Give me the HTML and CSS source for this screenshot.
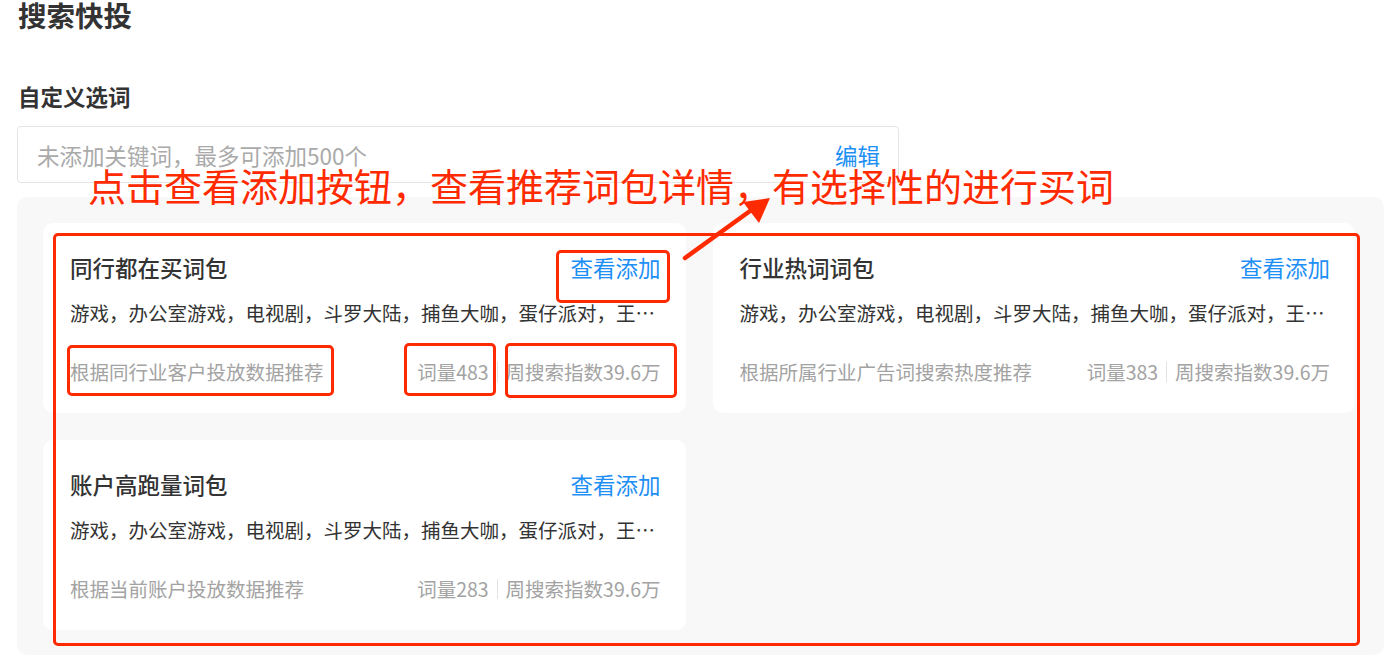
FILE: index.html
```html
<!DOCTYPE html>
<html lang="zh-CN">
<head>
<meta charset="utf-8">
<title>搜索快投</title>
<link rel="stylesheet" href="styles.css">
</head>
<body>
<div class="page">
  <h1 class="title">搜索快投</h1>
  <div class="label">自定义选词</div>
  <div class="input">
    <span class="placeholder">未添加关键词，最多可添加500个</span>
    <span class="link">编辑</span>
  </div>
  <div class="panel">
    <div class="card">
      <div class="card-head">
        <span class="card-title">同行都在买词包</span>
        <span class="link">查看添加</span>
      </div>
      <div class="keywords">游戏，办公室游戏，电视剧，斗罗大陆，捕鱼大咖，蛋仔派对，王者荣耀，和平精英</div>
      <div class="card-foot">
        <span>根据同行业客户投放数据推荐</span>
        <span class="stats"><span>词量483</span><i class="sep"></i><span>周搜索指数39.6万</span></span>
      </div>
    </div>
    <div class="card">
      <div class="card-head">
        <span class="card-title">行业热词词包</span>
        <span class="link">查看添加</span>
      </div>
      <div class="keywords">游戏，办公室游戏，电视剧，斗罗大陆，捕鱼大咖，蛋仔派对，王者荣耀，和平精英</div>
      <div class="card-foot">
        <span>根据所属行业广告词搜索热度推荐</span>
        <span class="stats"><span>词量383</span><i class="sep"></i><span>周搜索指数39.6万</span></span>
      </div>
    </div>
    <div class="card">
      <div class="card-head">
        <span class="card-title">账户高跑量词包</span>
        <span class="link">查看添加</span>
      </div>
      <div class="keywords">游戏，办公室游戏，电视剧，斗罗大陆，捕鱼大咖，蛋仔派对，王者荣耀，和平精英</div>
      <div class="card-foot">
        <span>根据当前账户投放数据推荐</span>
        <span class="stats"><span>词量283</span><i class="sep"></i><span>周搜索指数39.6万</span></span>
      </div>
    </div>
  </div>

  <div class="note">点击查看添加按钮，查看推荐词包详情，有选择性的进行买词</div>
  <div class="mark mark-all"></div>
  <div class="mark mark-btn"></div>
  <div class="mark mark-src"></div>
  <div class="mark mark-cnt"></div>
  <div class="mark mark-idx"></div>
  <svg class="arrow" width="100" height="80" viewBox="0 0 100 80">
    <line x1="5" y1="68" x2="70" y2="21" stroke="#ff2a00" stroke-width="4.5" stroke-linecap="round"/>
    <polygon points="90,8 63,12 79,33" fill="#ff2a00"/>
  </svg>
</div>
</body>
</html>
```

FILE: styles.css
```css
* { box-sizing: border-box; }
html, body { margin: 0; padding: 0; background: #fff; }
body {
  font-family: "Noto Sans CJK SC", "Noto Sans", sans-serif;
  color: #333;
}
.page {
  position: relative;
  width: 1389px;
  height: 660px;
  padding-left: 17px;
  overflow: hidden;
}
.title {
  margin: 0;
  padding-left: 1px;
  font-size: 28.5px;
  line-height: 30px;
  font-weight: 700;
  color: #333;
}
.label {
  margin-top: 51px;
  padding-left: 1px;
  font-size: 22.5px;
  line-height: 30px;
  font-weight: 700;
  color: #333;
}
.input {
  margin-top: 15px;
  width: 882px;
  height: 57px;
  border: 1px solid #e4e4e4;
  border-radius: 4px;
  padding: 0 18px 0 19px;
  display: flex;
  align-items: center;
  justify-content: space-between;
  font-size: 22.5px;
}
.placeholder { color: #aaa; }
.link { color: #1e8ff5; }
.panel {
  margin-top: 14px;
  width: 1367px;
  background: #f8f8f8;
  border-radius: 10px;
  padding: 26px 29px 25px 26px;
  display: grid;
  grid-template-columns: 1fr 1fr;
  gap: 27px;
}
.card {
  background: #fff;
  border-radius: 10px;
  height: 190px;
  padding: 29px 25px 0 27px;
  min-width: 0;
}
.card-head {
  display: flex;
  justify-content: space-between;
  align-items: center;
  font-size: 22.5px;
  line-height: 30px;
}
.card-title { color: #333; font-weight: 500; }
.keywords {
  margin-top: 17px;
  font-size: 19.5px;
  line-height: 28px;
  color: #333;
  white-space: nowrap;
  overflow: hidden;
  text-overflow: ellipsis;
}
.card-foot {
  margin-top: 31px;
  display: flex;
  justify-content: space-between;
  align-items: center;
  font-size: 19.5px;
  line-height: 28px;
  color: #a3a3a3;
}
.stats { display: flex; align-items: center; }
.sep {
  display: inline-block;
  width: 1px;
  height: 20px;
  background: #e3e3e3;
  margin: 0 8px;
}
.note {
  position: absolute;
  left: 88px;
  top: 162px;
  font-size: 38px;
  line-height: 46px;
  color: #ff2a00;
  white-space: nowrap;
}
.mark {
  position: absolute;
  border: 3px solid #ff2a00;
  border-radius: 5px;
}
.mark-all { left: 53px; top: 233px; width: 1307px; height: 413px; }
.mark-btn { left: 556px; top: 250px; width: 114px; height: 53px; }
.mark-src { left: 67px; top: 345px; width: 267px; height: 51px; }
.mark-cnt { left: 404px; top: 343px; width: 92px; height: 53px; }
.mark-idx { left: 505px; top: 343px; width: 172px; height: 55px; }
.arrow {
  position: absolute;
  left: 680px;
  top: 190px;
}
```
